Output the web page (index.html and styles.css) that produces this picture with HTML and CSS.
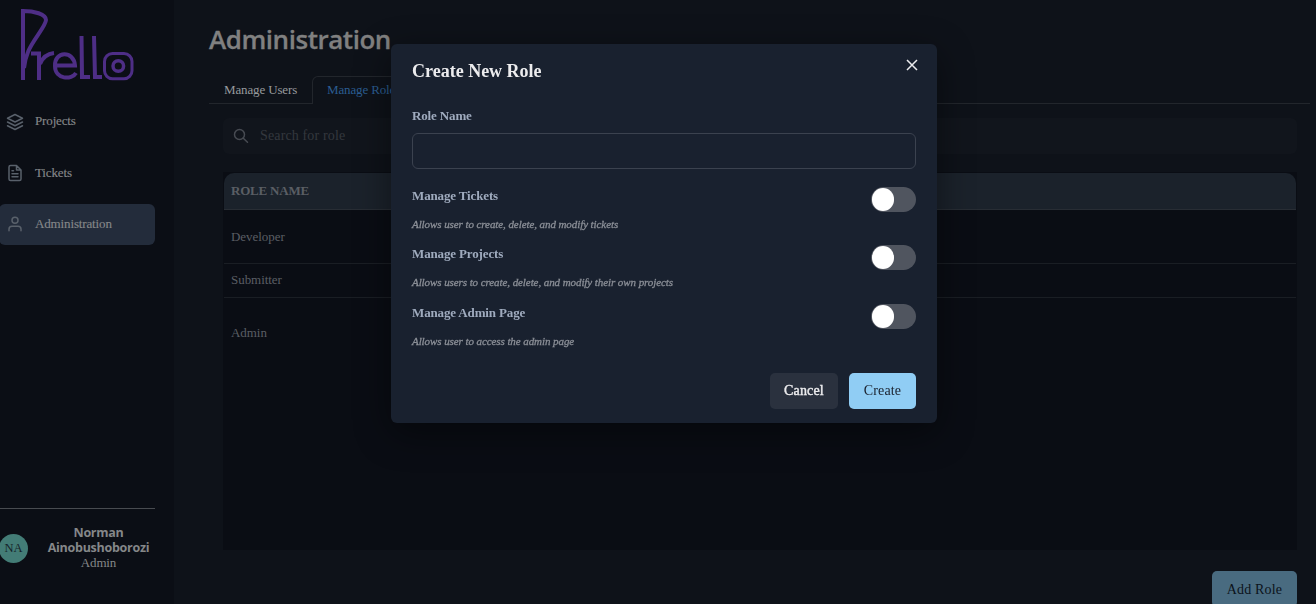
FILE: index.html
```html
<!DOCTYPE html>
<html lang="en">
<head>
<meta charset="utf-8">
<title>Prello - Administration</title>
<link rel="stylesheet" href="styles.css">
</head>
<body>
<div class="app">
  <aside class="sidebar">
    <svg class="logo" viewBox="0 0 180 100" width="180" height="100" role="img" aria-label="Prello">
      <g fill="none" stroke="#4e2e86" stroke-width="4">
        <path d="M23 80V11C34 11 46 14 46 20C46 26 32 41 28 52Q25 59 24 68"/>
        <path d="M31 53.500H39V80M40 64Q44 54 54 53"/>
        <path d="M55 65.500H75C74 50 54 51 55 66C55 80 72 80 76 73"/>
        <path d="M81.500 36L82 77H90M94 36L95 77H102"/>
        <rect x="104.500" y="53.500" width="27.500" height="25.200" rx="8" stroke-width="3"/>
        <circle cx="118.300" cy="66" r="5.300" stroke-width="3.500"/>
      </g>
    </svg>
    <nav class="nav">
      <a class="nav-item"><svg class="icon icon-low" viewBox="0 0 24 24"><path d="M12 2 2 7l10 5 10-5zM2 17l10 5 10-5M2 12l10 5 10-5"/></svg><span>Projects</span></a>
      <a class="nav-item"><svg class="icon" viewBox="0 0 24 24"><path d="M14 2H6a2 2 0 0 0-2 2v16a2 2 0 0 0 2 2h12a2 2 0 0 0 2-2V8zM14 2v6h6M16 13H8M16 17H8M10 9H8"/></svg><span>Tickets</span></a>
      <a class="nav-item active"><svg class="icon" viewBox="0 0 24 24"><path d="M20 21v-2a4 4 0 0 0-4-4H8a4 4 0 0 0-4 4v2"/><circle cx="12" cy="7" r="4"/></svg><span>Administration</span></a>
    </nav>
    <div class="profile">
      <div class="avatar">NA</div>
      <div class="who"><b>Norman<br>Ainobushoborozi</b><span>Admin</span></div>
    </div>
  </aside>
  <main class="main">
    <h1 class="title">Administration</h1>
    <div class="tabs"><div class="tab">Manage Users</div><div class="tab selected">Manage Roles</div><div class="tab-rest"></div></div>
    <div class="panel">
      <div class="search">
        <svg class="search-icon" viewBox="0 0 16 16"><circle cx="6.500" cy="6.500" r="5"/><path d="m10.300 10.300 4.200 4"/></svg>
        <span>Search for role</span>
      </div>
      <div class="table">
        <div class="row head">ROLE NAME</div>
        <div class="row developer">Developer</div>
        <div class="row submitter">Submitter</div>
        <div class="row admin">Admin</div>
      </div>
      <button class="btn add">Add Role</button>
    </div>
  </main>
</div>
<div class="overlay">
  <section class="modal">
    <header class="modal-head"><h2>Create New Role</h2>
      <svg class="close" viewBox="0 0 12 12"><path d="m1 1 10 10M11 1 1 11"/></svg></header>
    <label class="label" for="role">Role Name</label>
    <input class="input" id="role">
    <div class="perm"><div><div class="label">Manage Tickets</div><p class="hint">Allows user to create, delete, and modify tickets</p></div><div class="switch"></div></div>
    <div class="perm tall"><div><div class="label">Manage Projects</div><p class="hint">Allows users to create, delete, and modify their own projects</p></div><div class="switch"></div></div>
    <div class="perm"><div><div class="label">Manage Admin Page</div><p class="hint">Allows user to access the admin page</p></div><div class="switch"></div></div>
    <footer class="actions"><button class="btn cancel">Cancel</button><button class="btn create">Create</button></footer>
  </section>
</div>
</body>
</html>
```
FILE: styles.css
```css
* { box-sizing: border-box; }
body { margin: 0; height: 604px; overflow: hidden; background: #0e1219; font: 13px/16px "Liberation Serif", serif; letter-spacing: -.14px; }
h1, h2, p { margin: 0; }
.app { display: flex; height: 604px; }
.sidebar { width: 174px; flex: none; display: flex; flex-direction: column; background: #0b0e15; color: #858789; }
.logo { display: block; flex: none; }
.nav { display: flex; flex-direction: column; gap: 11px; width: 155px; }
.nav-item { display: flex; align-items: center; gap: 11px; height: 41px; padding-left: 6px; border-radius: 6px; -webkit-text-stroke: .15px #858789; }
.nav-item.active { margin-left: -1px; padding: 0 0 2px 7px; width: 156px; background: #232c3b; }
.icon { width: 18px; height: 18px; fill: none; stroke: #59616b; stroke-width: 2; stroke-linecap: round; stroke-linejoin: round; }
.icon-low { margin-top: 2px; }
.profile { width: 155px; margin-top: 263px; padding-top: 16px; border-top: 1px solid #484b50; display: flex; align-items: center; justify-content: space-between; }
.avatar { width: 29px; height: 29px; margin: 1px 0 0 -1px; border-radius: 50%; background: #437c76; color: #15232a; text-align: center; line-height: 29px; font-size: 12.5px; }
.who { width: 113px; text-align: center; line-height: 15px; }
.who b { display: block; font: 700 12.5px/15px "Open Sans", sans-serif; letter-spacing: -.27px; }

.main { flex: 1; padding: 22px 6px 0 35px; overflow: hidden; }
.title { height: 54px; color: #808080; font: 600 26px/35px "Open Sans", sans-serif; letter-spacing: -.46px; -webkit-text-stroke: .3px #808080; }
.tabs { display: flex; height: 28px; line-height: 27px; color: #979a9d; }
.tab { width: 103px; padding-left: 15px; border-bottom: 1px solid #22262c; white-space: nowrap; }
.tab.selected { width: 106px; padding-left: 14px; line-height: 25px; color: #2b5d91; border: 1px solid #22262c; border-bottom: 0; border-radius: 6px 6px 0 0; }
.tab-rest { flex: 1; border-bottom: 1px solid #22262c; }
.panel { padding: 14px 13px 0 14px; display: flex; flex-direction: column; }
.search { display: flex; align-items: center; gap: 11px; height: 36px; padding-left: 10px; border-radius: 6px; background: #11151c; color: #34383e; font-size: 14px; letter-spacing: .14px; }
.search-icon { width: 16px; height: 16px; fill: none; stroke: #474b52; stroke-width: 1.5; stroke-linecap: round; }
.table { height: 378px; margin-top: 18px; padding: 1px 1px 0; background: #0a0d14; color: #5a5e64; letter-spacing: -.05px; }
.row { display: flex; align-items: center; padding-left: 7px; border-bottom: 1px solid #1a1e24; }
.head { height: 37px; background: #1b222b; border-color: #282d34; border-radius: 10px 10px 0 0; font-weight: bold; letter-spacing: -.2px; }
.developer { height: 54px; }
.submitter { height: 34px; padding-bottom: 2px; }
.admin { height: 71px; padding-bottom: 2px; border: 0; }
.btn { flex: none; height: 36px; padding: 0; border: 0; border-radius: 5px; font: 14px/18px "Liberation Serif", serif; }
.add { align-self: flex-end; width: 85px; margin-top: 21px; padding-top: 2px; background: #496b80; color: #0c131b; letter-spacing: .15px; }

.overlay { position: fixed; inset: 0; display: flex; justify-content: center; align-items: flex-start; padding: 44px 0 0 12px; }
.modal { width: 546px; height: 379px; padding: 0 21px; border-radius: 6px; background: #19212f; box-shadow: 0 10px 36px rgba(0,0,0,.45); }
.modal-head { display: flex; justify-content: space-between; height: 63px; padding-top: 15px; color: #ececee; }
.modal-head h2 { font: bold 18px/25px "Liberation Serif", serif; letter-spacing: 0; }
.close { width: 12px; height: 12px; margin-right: -2px; fill: none; stroke: #ececee; stroke-width: 1.5; }
.label { display: block; height: 18px; line-height: 18px; color: #9fabbe; font-weight: bold; }
.input { display: block; width: 504px; height: 36px; margin: 8px 0 18px; border: 1px solid #3b424f; border-radius: 6px; background: transparent; color: #ececee; }
.perm { display: flex; justify-content: space-between; height: 58px; }
.perm.tall { height: 59px; }
.hint { margin-top: 11px; line-height: 16px; font-size: 11px; font-style: italic; letter-spacing: -.08px; color: #8b8f97; -webkit-text-stroke: .3px #8b8f97; }
.switch { width: 45px; height: 25px; padding: 1px .5px; border-radius: 13px; background: #50555f; }
.switch::before { content: ""; display: block; width: 22.500px; height: 22.500px; border-radius: 50%; background: #fff; }
.actions { display: flex; justify-content: flex-end; gap: 11px; padding-top: 11px; }
.cancel { width: 68px; background: #2a313e; color: #ececee; letter-spacing: .15px; -webkit-text-stroke: .4px #ececee; }
.create { width: 67px; background: #90cdf4; color: #1a202c; letter-spacing: .15px; }
```
